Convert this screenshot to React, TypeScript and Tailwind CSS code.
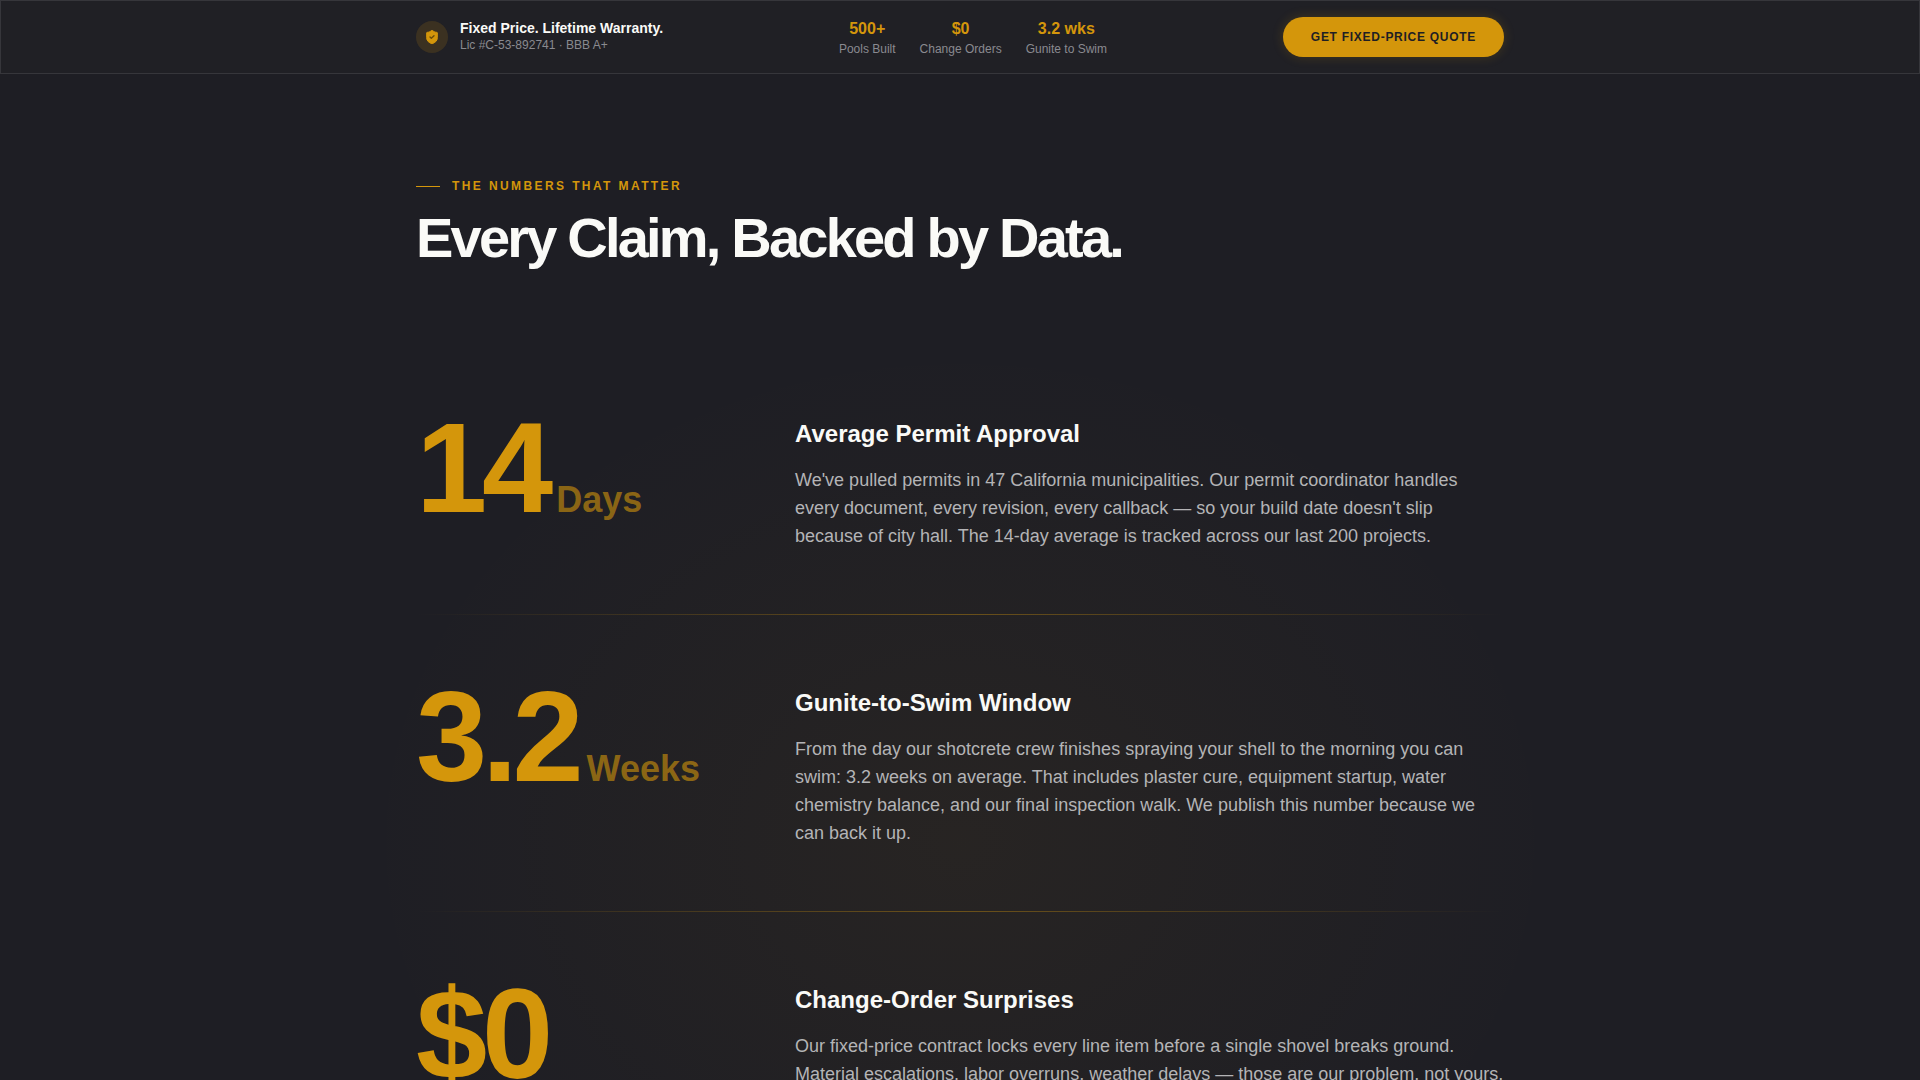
const stats = [
  { value: "500+", label: "Pools Built" },
  { value: "$0", label: "Change Orders" },
  { value: "3.2 wks", label: "Gunite to Swim" },
];

const rows = [
  {
    num: "14",
    unit: "Days",
    title: "Average Permit Approval",
    body: "We've pulled permits in 47 California municipalities. Our permit coordinator handles every document, every revision, every callback — so your build date doesn't slip because of city hall. The 14-day average is tracked across our last 200 projects.",
  },
  {
    num: "3.2",
    unit: "Weeks",
    title: "Gunite-to-Swim Window",
    body: "From the day our shotcrete crew finishes spraying your shell to the morning you can swim: 3.2 weeks on average. That includes plaster cure, equipment startup, water chemistry balance, and our final inspection walk. We publish this number because we can back it up.",
  },
  {
    num: "$0",
    unit: "",
    title: "Change-Order Surprises",
    body: "Our fixed-price contract locks every line item before a single shovel breaks ground. Material escalations, labor overruns, weather delays — those are our problem, not yours.",
  },
];

export default function App() {
  return (
    <div className="relative h-screen overflow-hidden bg-[#1e1e24] font-['Liberation_Sans',Arial,sans-serif] text-[#fafaf7]">
      <div className="absolute inset-0 bg-[radial-gradient(ellipse_600px_500px_at_50%_78%,rgba(212,150,11,0.05),transparent)]"></div>

      <header className="relative h-[74px] border border-white/10 bg-[#202025]">
        <div className="mx-auto flex h-full w-[1088px] items-center justify-between">
          <div className="flex items-center gap-3">
            <div className="grid h-8 w-8 place-items-center rounded-full bg-[#d4960b]/15">
              <svg width="16" height="16" viewBox="0 0 24 24" fill="none">
                <path
                  d="M20 13c0 5-3.5 7.5-7.66 8.95a1 1 0 0 1-.67-.01C7.5 20.5 4 18 4 13V6a1 1 0 0 1 1-1c2 0 4.5-1.2 6.24-2.72a1.17 1.17 0 0 1 1.52 0C14.51 3.81 17 5 19 5a1 1 0 0 1 1 1z"
                  fill="#d4960b"
                  stroke="#d4960b"
                  strokeWidth="1.5"
                />
                <path d="m9 12 2 2 4-4" stroke="#6b4d0a" strokeWidth="2" strokeLinecap="round" strokeLinejoin="round" />
              </svg>
            </div>
            <div className="-mt-[3px]">
              <div className="text-sm leading-5 font-semibold">Fixed Price. Lifetime Warranty.</div>
              <div className="-mt-px text-xs leading-4 text-[#8a8a90]">Lic #C-53-892741 · BBB A+</div>
            </div>
          </div>

          <div className="flex items-center gap-6">
            {stats.map((s) => (
              <div key={s.label} className="text-center">
                <div className="text-base leading-6 font-bold text-[#d4960b]">{s.value}</div>
                <div className="text-xs leading-4 text-[#8a8a90]">{s.label}</div>
              </div>
            ))}
          </div>

          <button className="h-10 rounded-full bg-[#d4960b] px-7 text-xs font-bold tracking-[0.06em] text-[#1e1e24] shadow-[0_0_12px_rgba(212,150,11,0.2)]">
            GET FIXED-PRICE QUOTE
          </button>
        </div>
      </header>

      <main className="relative mx-auto w-[1088px]">
        <section className="pt-[104px] pb-[73px]">
          <div className="flex items-center gap-3">
            <span className="h-px w-6 bg-[#d4960b]"></span>
            <span className="text-xs font-bold tracking-[0.2em] text-[#d4960b]">THE NUMBERS THAT MATTER</span>
          </div>
          <h1 className="mt-[9px] text-[56px] leading-[70px] font-bold tracking-[-0.05em]">Every Claim, Backed by Data.</h1>
        </section>

        {rows.map((r, i) => (
          <div key={r.title}>
            <div className="grid grid-cols-[315px_1fr] gap-16 py-16">
              <div className="flex items-baseline gap-2">
                <span className="text-[128px] leading-[0.9] font-bold tracking-[-0.04em] text-[#d4960b]">{r.num}</span>
                {r.unit && <span className="text-4xl font-bold text-[#d4960b]/60">{r.unit}</span>}
              </div>
              <div className="pt-2">
                <h3 className="text-2xl leading-8 font-semibold">{r.title}</h3>
                <p className="mt-4 text-lg leading-7 text-[#b4b4b6]">{r.body}</p>
              </div>
            </div>
            {i < rows.length - 1 && (
              <div className="h-px bg-gradient-to-r from-transparent via-[#d4960b]/40 to-transparent"></div>
            )}
          </div>
        ))}
      </main>
    </div>
  );
}
